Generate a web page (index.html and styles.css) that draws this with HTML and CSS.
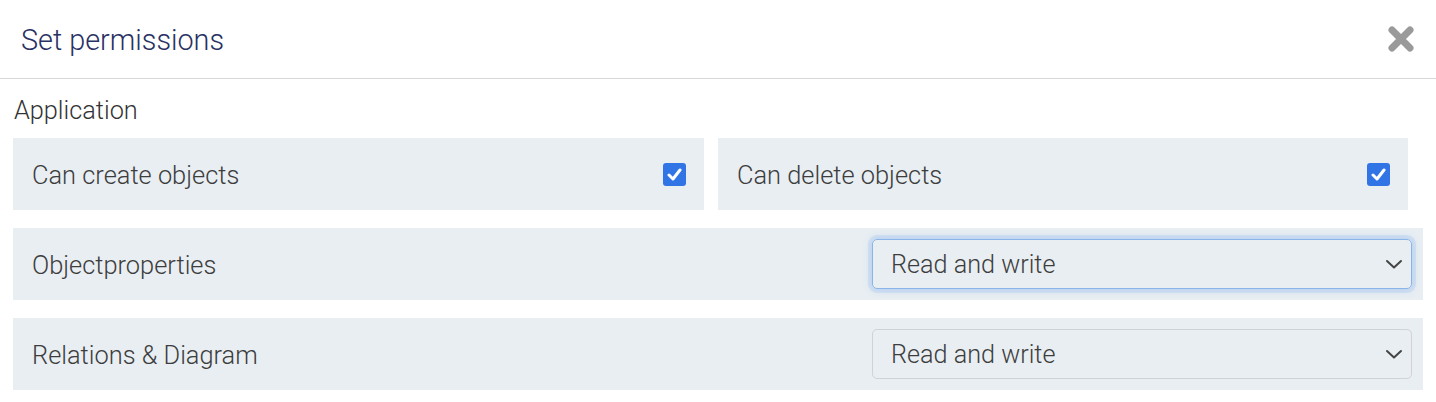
FILE: index.html
```html
<!DOCTYPE html>
<html lang="en">
<head>
<meta charset="utf-8">
<title>Set permissions</title>
<link rel="stylesheet" href="styles.css">
</head>
<body>
<div class="modal">
  <div class="modal-header">
    <h1 class="modal-title">Set permissions</h1>
    <button class="close" aria-label="Close">
      <svg width="26" height="26" viewBox="0 0 26 26"><path d="M4 4 L22 22 M22 4 L4 22" stroke="#9a9a9a" stroke-width="7" stroke-linecap="round"/></svg>
    </button>
  </div>
  <div class="modal-body">
    <div class="section-label">Application</div>
    <div class="check-grid">
      <div class="perm-box">
        <span class="perm-label">Can create objects</span>
        <span class="checkbox"><svg width="15" height="13" viewBox="0 0 15 13"><path d="M2 7 L6 11 L13 2" fill="none" stroke="#fff" stroke-width="3" stroke-linecap="round" stroke-linejoin="round"/></svg></span>
      </div>
      <div class="perm-box">
        <span class="perm-label">Can delete objects</span>
        <span class="checkbox"><svg width="15" height="13" viewBox="0 0 15 13"><path d="M2 7 L6 11 L13 2" fill="none" stroke="#fff" stroke-width="3" stroke-linecap="round" stroke-linejoin="round"/></svg></span>
      </div>
    </div>
    <div class="perm-row">
      <span class="perm-label">Objectproperties</span>
      <div class="select focused">
        <span>Read and write</span>
        <svg width="18" height="12" viewBox="0 0 18 12"><path d="M2 3 L9 9.5 L16 3" fill="none" stroke="#444" stroke-width="2" stroke-linecap="round" stroke-linejoin="round"/></svg>
      </div>
    </div>
    <div class="perm-row">
      <span class="perm-label">Relations &amp; Diagram</span>
      <div class="select">
        <span>Read and write</span>
        <svg width="18" height="12" viewBox="0 0 18 12"><path d="M2 3 L9 9.5 L16 3" fill="none" stroke="#444" stroke-width="2" stroke-linecap="round" stroke-linejoin="round"/></svg>
      </div>
    </div>
  </div>
</div>
</body>
</html>
```

FILE: styles.css
```css
* { box-sizing: border-box; }
html, body { margin: 0; padding: 0; background: #fff; }
body {
  font-family: Roboto, "Noto Sans", "Liberation Sans", sans-serif;
  color: #555;
}
.modal { width: 1436px; }
.modal-header {
  height: 79px;
  border-bottom: 1px solid #d6d6d6;
  display: flex;
  align-items: center;
  justify-content: space-between;
  padding: 0 22px 0 21px;
}
.modal-title {
  margin: 0;
  font-size: 28.8px;
  font-weight: 300;
  color: #283163;
  line-height: 1;
  padding-top: 3px;
}
.close {
  border: 0;
  background: none;
  padding: 0;
  width: 26px;
  height: 26px;
  display: flex;
  cursor: pointer;
}
.modal-body { padding: 0 13px 0 13px; }
.section-label {
  font-size: 25.3px;
  font-weight: 300;
  line-height: 28px;
  padding: 18px 0 0 1px;
  height: 59px;
  color: #333;
}
.check-grid {
  display: grid;
  grid-template-columns: 691px 690px;
  column-gap: 14px;
}
.perm-box, .perm-row {
  background: #e8eef2;
  height: 72px;
  display: flex;
  align-items: center;
  justify-content: space-between;
  padding: 0 18px 0 19px;
}
.perm-row { margin-top: 18px; padding-right: 11px; }
.perm-label {
  font-size: 25.4px;
  font-weight: 300;
  color: #3d3d3d;
  padding-top: 1px;
}
.checkbox {
  width: 23px;
  height: 23px;
  border-radius: 3px;
  background: #3174e6;
  display: flex;
  align-items: center;
  justify-content: center;
}
.select {
  width: 540px;
  height: 50px;
  border: 1px solid #cfd3d6;
  border-radius: 5px;
  display: flex;
  align-items: center;
  justify-content: space-between;
  padding: 0 8px 0 18px;
  font-size: 25.2px;
  font-weight: 300;
  color: #3d3d3d;
}
.select span { padding-top: 1px; }
.select.focused {
  border-color: #8bb4ea;
  box-shadow: 0 0 0 4px rgba(120, 170, 240, 0.18), 0 0 8px rgba(110, 160, 235, 0.35);
}
```
